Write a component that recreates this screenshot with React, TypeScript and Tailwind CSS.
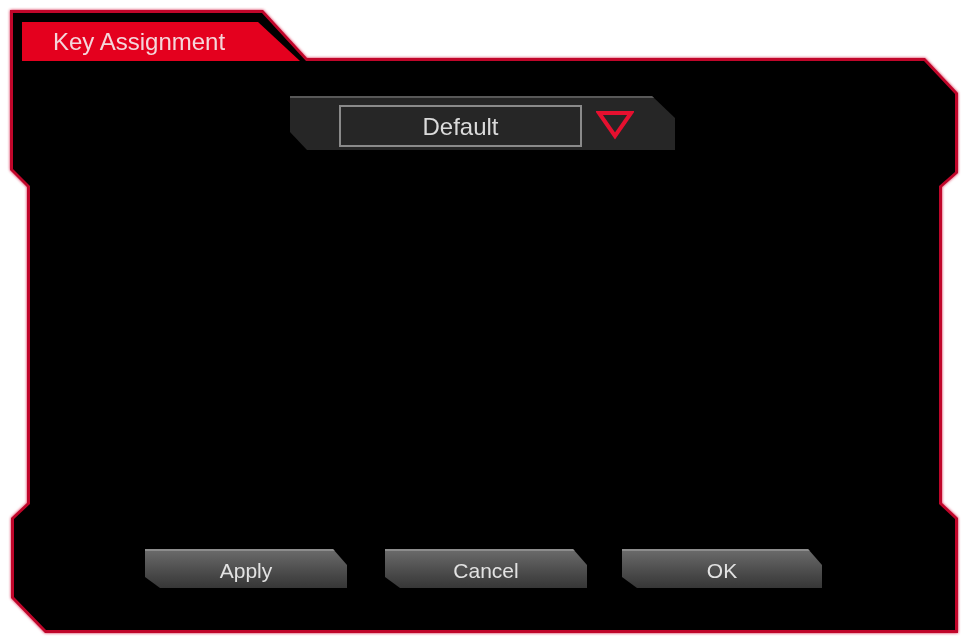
const buttons = [
  { label: 'Apply', gap: 'ml-0', width: 'w-[202px]' },
  { label: 'Cancel', gap: 'ml-[38px]', width: 'w-[202px]' },
  { label: 'OK', gap: 'ml-[35px]', width: 'w-[200px]' },
]

function PanelButton({ label, className }: { label: string; className: string }) {
  return (
    <button
      className={`flex h-[39px] items-center justify-center bg-gradient-to-b from-[#6c6c6c] to-[#363636] text-[21px] leading-none text-[#e2e2e2] shadow-[inset_0_2px_0_#8c8c8c] [clip-path:polygon(0_0,calc(100%-14px)_0,100%_16px,100%_100%,15px_100%,0_28px)] ${className}`}
    >
      <span className="mt-[3px]">{label}</span>
    </button>
  )
}

const App = () => {
  return (
    <main
      className="min-h-screen w-full bg-white pl-[10px] pt-[10px]"
      style={{ fontFamily: '"Liberation Sans", Arial, sans-serif' }}
    >
      <div className="w-[948px] drop-shadow-[0_0_1.5px_#d4143e]">
        {/* red frame */}
        <div className="h-[623px] w-[948px] bg-[#c0062a] p-[3px] [clip-path:polygon(0_0,253px_0,297px_48px,915px_48px,948px_83px,948px_163px,932px_177px,932px_493px,948px_508px,948px_623px,35px_623px,1px_588px,1px_508px,17px_493px,17px_177px,0_160px)]">
          <div className="flex h-[617px] w-[942px] flex-col bg-black [clip-path:polygon(0_0,249px_0,293px_48px,911px_48px,942px_81px,942px_159px,926px_173px,926px_491px,942px_506px,942px_617px,33px_617px,1px_584px,1px_506px,17px_491px,17px_173px,0_156px)]">
            {/* title tab */}
            <div className="ml-[9px] mt-[9px] flex h-[39px] w-[278px] items-center bg-[#e4001e] pl-[31px] [clip-path:polygon(0_0,236px_0,278px_39px,0_39px)]">
              <span className="text-[24px] leading-none text-[#f4d6db]">Key Assignment</span>
            </div>

            {/* profile selector */}
            <div className="ml-[277px] mt-[35px] flex h-[54px] w-[385px] items-start bg-[#262626] pl-[49px] pt-[9px] shadow-[inset_0_2px_0_#585858] [clip-path:polygon(0_0,362px_0,385px_22px,385px_54px,17px_54px,0_36px)]">
              <div className="flex h-[42px] w-[243px] items-center justify-center border-2 border-[#8a8a8a]">
                <span className="mt-[2px] text-[24px] leading-none text-[#dadada]">Default</span>
              </div>
              <svg width="38" height="30" viewBox="0 0 38 30" className="ml-[14px] mt-[5px]">
                <polygon points="3,3 35,3 19,26" fill="none" stroke="#e5102f" strokeWidth="4" strokeLinejoin="miter" />
              </svg>
            </div>

            {/* action buttons */}
            <div className="mb-[42px] ml-[132px] mt-auto flex">
              {buttons.map((b) => (
                <PanelButton key={b.label} label={b.label} className={`${b.gap} ${b.width}`} />
              ))}
            </div>
          </div>
        </div>
      </div>
    </main>
  )
}

export default App
